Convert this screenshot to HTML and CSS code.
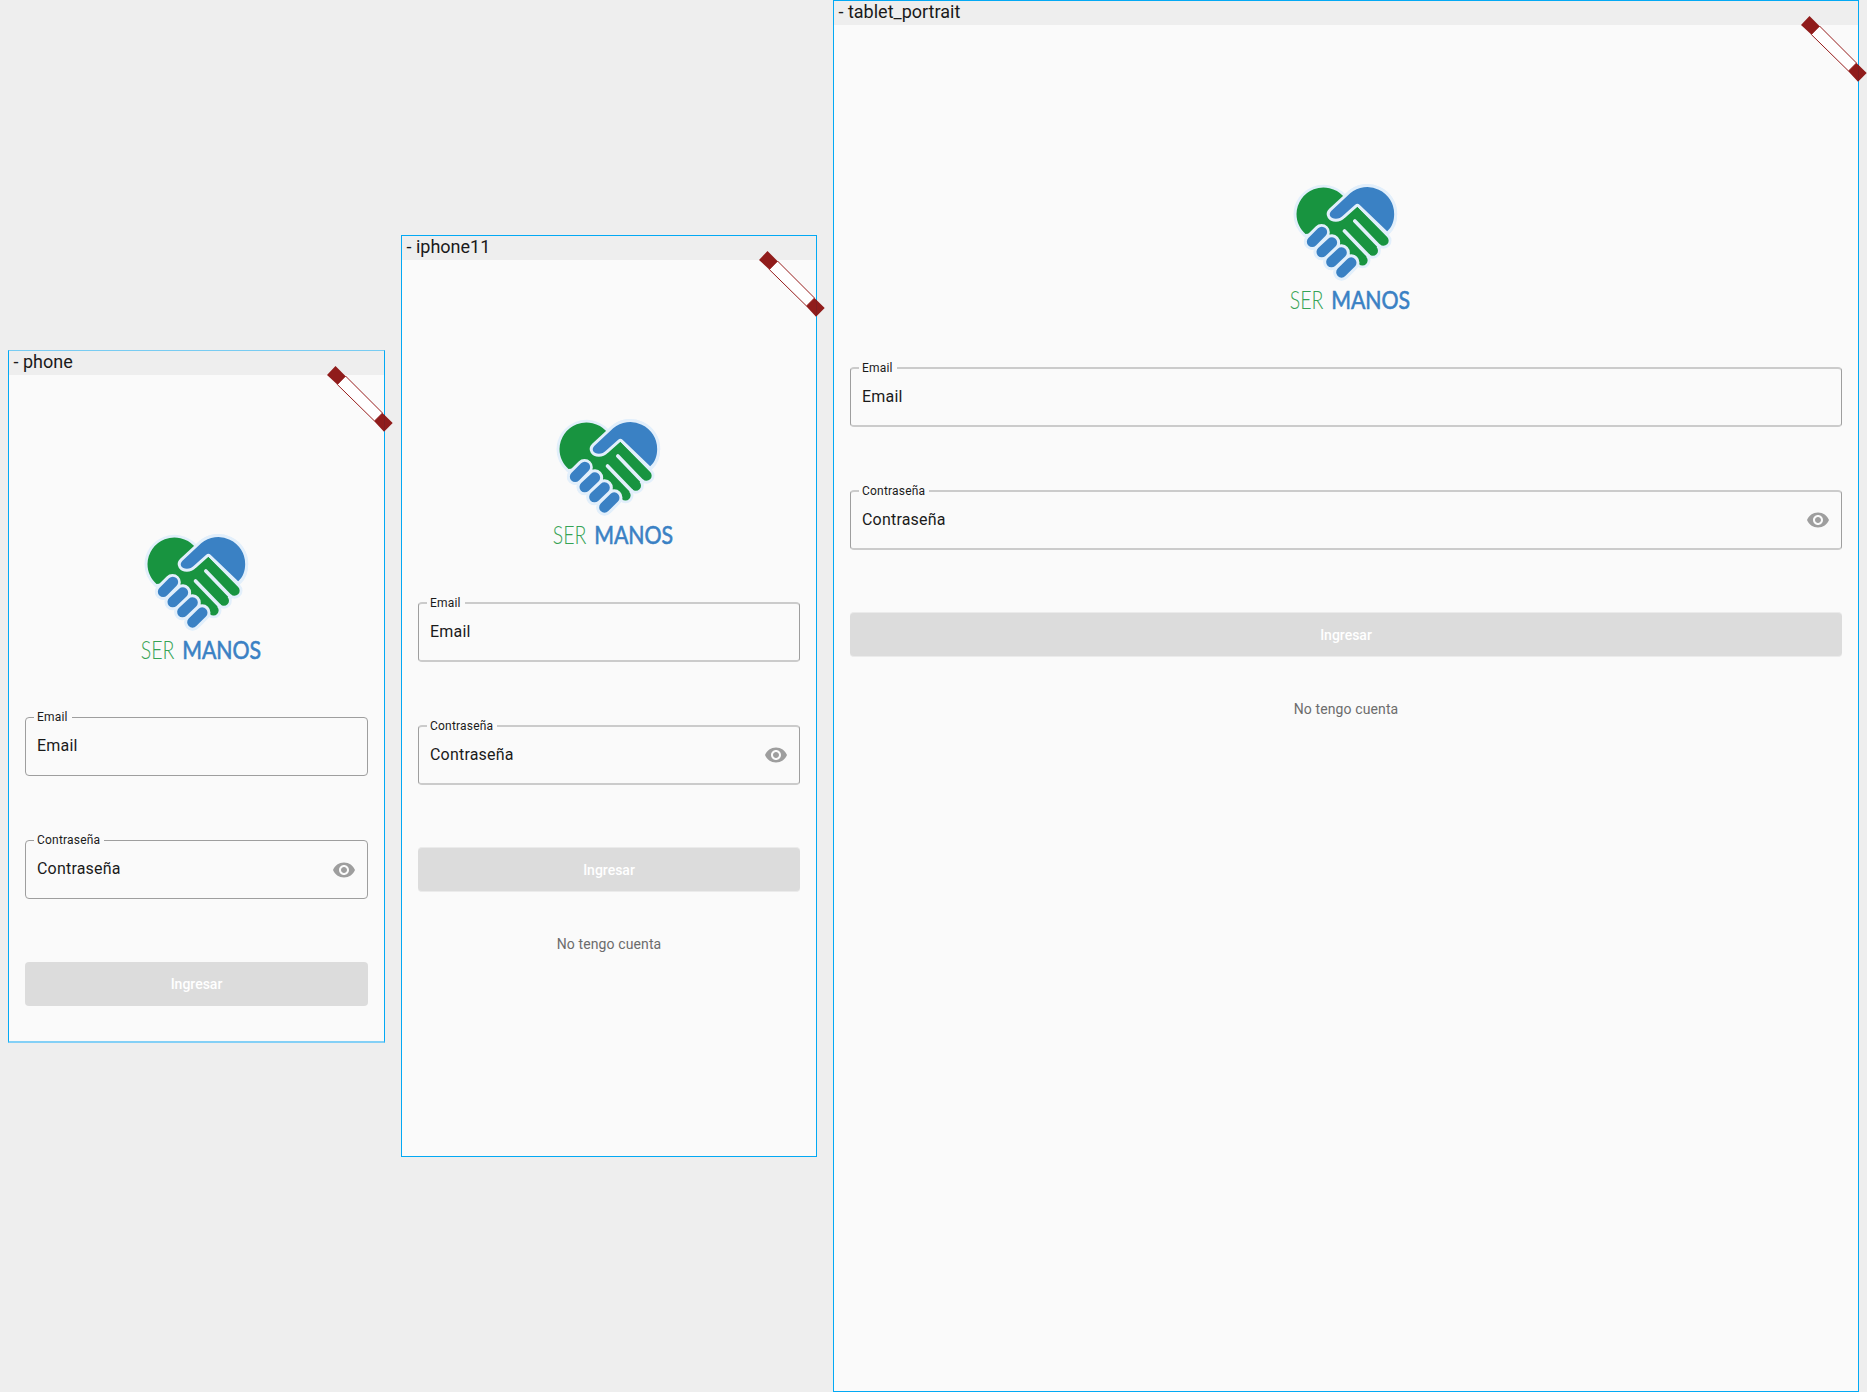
FILE: index.html
```html
<!DOCTYPE html>
<html lang="es">
<head>
<meta charset="utf-8">
<title>Ser Manos</title>
<link rel="stylesheet" href="styles.css">
</head>
<body>
<svg width="0" height="0" class="defs">
  <defs>
    <symbol id="logo" viewBox="5.500 0 390 420">
      <g fill="#e2effb" stroke="#e2effb" stroke-width="19" stroke-linejoin="round" stroke-linecap="round">
        <path d="M190 62A81 81 0 0 0 52 117C52 142 63 162 79 177L215 275L326 169C340 155 345 138 345 117A80.500 80.500 0 0 0 213 55L199 68Z" stroke-width="18"/>
        <path d="M127 172L99 200M158 203L128 231M187 233L157 261M216 263L187 292M224 107L313 197M220 166L281 227M215 222L250 256" stroke-width="48"/>
      </g>
      <g fill="#189440">
        <path d="M192 63A81 81 0 0 0 52 117C52 142 63 162 79 177L127 172L220 262L250 256L281 227L313 197L235 96L205 80Z"/>
        <path d="M222 105L313 197M200 146L281 227M190 196L250 256" fill="none" stroke="#189440" stroke-width="31" stroke-linecap="round"/>
      </g>
      <path d="M227 138L302 216M196 168L269 244" stroke="#e2effb" stroke-width="11" stroke-linecap="round"/>
      <path d="M213 55L157 107C145 119 155 131 170 131C179 131 185 128 191 122L228 89Q235 83 242 90L324 169C339 155 345 138 345 117A80.500 80.500 0 0 0 213 55Z" fill="#3a81c4" stroke="#e2effb" stroke-width="18" stroke-linejoin="round" paint-order="stroke"/>
      <g stroke-linecap="round">
        <path d="M127 172L99 200M158 203L128 231M187 233L157 261M216 263L187 292" stroke="#e2effb" stroke-width="50"/>
        <path d="M128 171L99 200M158 203L128 231M187 233L157 261M216 263L187 292" stroke="#3a81c4" stroke-width="32"/>
      </g>
      <text x="32" y="401" class="logo-ser" textLength="101" lengthAdjust="spacingAndGlyphs">SER</text>
      <text x="156" y="401" class="logo-manos" textLength="237" lengthAdjust="spacingAndGlyphs">MANOS</text>
    </symbol>
    <symbol id="eye" viewBox="0 0 24 24">
      <path d="M12 4.500C7 4.500 2.730 7.610 1 12c1.730 4.390 6 7.500 11 7.500s9.270-3.110 11-7.500c-1.730-4.390-6-7.500-11-7.500zM12 17c-2.760 0-5-2.240-5-5s2.240-5 5-5 5 2.240 5 5-2.240 5-5 5zm0-8c-1.660 0-3 1.340-3 3s1.340 3 3 3 3-1.340 3-3-1.340-3-3-3z" fill="#9e9e9e"/>
    </symbol>
    <symbol id="banner" viewBox="0 0 66 66">
      <path d="M18.500 10L55.500 47L47.500 55L10.300 18.500Z" fill="#fff" stroke="#981d1c" stroke-width="1"/>
      <path d="M8.500 0L18.700 10.200L10.300 18.500L0 9Z M55.500 47L65.700 57L57 65.700L47.300 55.200Z" fill="#901c1b"/>
      <path d="M57.500 49V65" stroke="#7f1d20" stroke-width="1"/>
    </symbol>
  </defs>
</svg>
<main class="board">
  <section class="frame phone">
    <header class="frame-name">- phone</header>
    <div class="screen">
      <svg class="logo"><use href="#logo"/></svg>
      <div class="field"><span class="label">Email</span><span class="value">Email</span></div>
      <div class="field"><span class="label">Contraseña</span><span class="value">Contraseña</span><svg class="eye"><use href="#eye"/></svg></div>
      <div class="button">Ingresar</div>
    </div>
    <svg class="banner"><use href="#banner"/></svg>
  </section>
  <section class="frame iphone">
    <header class="frame-name">- iphone11</header>
    <div class="screen">
      <svg class="logo"><use href="#logo"/></svg>
      <div class="field"><span class="label">Email</span><span class="value">Email</span></div>
      <div class="field"><span class="label">Contraseña</span><span class="value">Contraseña</span><svg class="eye"><use href="#eye"/></svg></div>
      <div class="button">Ingresar</div>
      <div class="link">No tengo cuenta</div>
    </div>
    <svg class="banner"><use href="#banner"/></svg>
  </section>
  <section class="frame tablet">
    <header class="frame-name">- tablet_portrait</header>
    <div class="screen">
      <svg class="logo"><use href="#logo"/></svg>
      <div class="field"><span class="label">Email</span><span class="value">Email</span></div>
      <div class="field"><span class="label">Contraseña</span><span class="value">Contraseña</span><svg class="eye"><use href="#eye"/></svg></div>
      <div class="button">Ingresar</div>
      <div class="link">No tengo cuenta</div>
    </div>
    <svg class="banner"><use href="#banner"/></svg>
  </section>
</main>
</body>
</html>
```
FILE: styles.css
```css
* { box-sizing: border-box; }
body {
  margin: 0;
  background: #eee;
  color: #1a1a1a;
  font-family: Roboto, sans-serif;
}
.defs { display: block; position: absolute; }
.board {
  display: flex;
  align-items: center;
  gap: 16px;
  height: 1392px;
  padding: 0 8px;
}
.frame {
  position: relative;
  display: flex;
  flex: none;
  flex-direction: column;
  border: 1px solid #03a9f4;
}
.phone {
  width: 377px;
  height: 693px;
  margin-top: 1px;
  border-top-color: #78ccf2;
  border-bottom: 2px solid #84d0f6;
}
.iphone { width: 416px; height: 922px; }
.tablet { width: 1026px; height: 1392px; }
.frame-name {
  height: 24px;
  padding-left: 4.5px;
  font-size: 18px;
  line-height: 22px;
}
.screen {
  display: flex;
  flex: 1;
  flex-direction: column;
  padding: 150px 16px 0;
  background: #fafafa;
}
.logo {
  align-self: center;
  flex: none;
  width: 130px;
  height: 140px;
  margin-bottom: 52px;
}
.logo-ser { font: 300 75px Lato, sans-serif; fill: #35a355; }
.logo-manos {
  font: 400 74px Lato, sans-serif;
  fill: #3a81c4;
  stroke: #3a81c4;
  stroke-width: 1.8px;
}
.field {
  position: relative;
  display: flex;
  justify-content: space-between;
  height: 60px;
  margin-bottom: 63px;
  padding: 0 11px;
  border: 1px solid #9e9e9e;
  border-width: 2px 1px;
  border-top-color: #cbcbcb;
  border-bottom-color: #cbcbcb;
  border-radius: 4px;
}
.field + .button { margin-top: -1px; }
.label {
  position: absolute;
  top: -9px;
  left: 8px;
  padding: 0 4px 0 3px;
  background: #fafafa;
  font-size: 12px;
  line-height: 16px;
  letter-spacing: 0.2px;
}
.value {
  padding-top: 18px;
  font-size: 16px;
  line-height: 20px;
  letter-spacing: 0.2px;
}
.eye { width: 24px; height: 24px; margin-top: 16px; }
.button {
  flex: none;
  height: 45px;
  border: solid #ebebeb;
  border-width: 1px 0;
  border-radius: 4px;
  background: #dcdcdc;
  color: #fff;
  font-size: 14px;
  font-weight: 500;
  line-height: 44px;
  text-align: center;
}
.link {
  margin-top: 42px;
  color: #6c6c6c;
  font-size: 14px;
  font-weight: 450;
  line-height: 20px;
  letter-spacing: 0.12px;
  text-align: center;
}
.phone .field { height: 59px; margin-bottom: 64px; border: 1px solid #9e9e9e; }
.phone .eye { margin-top: 17px; }
.phone .button { height: 44px; border: 0; }
.banner {
  position: absolute;
  top: 15px;
  right: -9px;
  width: 66px;
  height: 66px;
}
```
